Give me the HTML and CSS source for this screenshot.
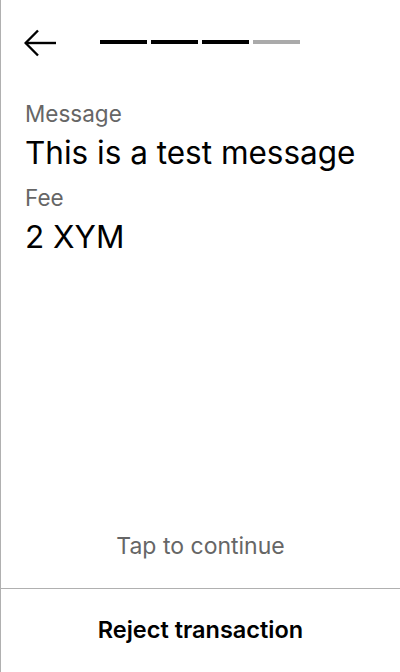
FILE: index.html
```html
<!DOCTYPE html>
<html lang="en">
<head>
<meta charset="utf-8">
<title>Confirm transaction</title>
<link rel="stylesheet" href="styles.css">
</head>
<body>
<div class="screen">
  <header class="header">
    <button class="back" aria-label="Back">
      <svg width="32" height="28" viewBox="0 0 32 28" fill="none" stroke="#000" stroke-width="2.4" stroke-linecap="butt" stroke-linejoin="miter">
        <path d="M14 1.5 L1.6 14 L14 26.5"/>
        <path d="M1.6 14 H32"/>
      </svg>
    </button>
    <div class="progress">
      <span class="step done"></span>
      <span class="step done"></span>
      <span class="step done"></span>
      <span class="step"></span>
    </div>
  </header>
  <main class="content">
    <div class="label">Message</div>
    <div class="value">This is a test message</div>
    <div class="label">Fee</div>
    <div class="value">2 XYM</div>
  </main>
  <div class="tap">Tap to continue</div>
  <button class="reject">Reject transaction</button>
</div>
</body>
</html>
```

FILE: styles.css
```css
html, body {
  margin: 0;
  padding: 0;
  background: #fff;
}
body {
  font-family: Inter, "Noto Sans", sans-serif;
  color: #000;
}
.screen {
  box-sizing: border-box;
  width: 400px;
  height: 672px;
  border-left: 1px solid #b0b0b0;
  display: flex;
  flex-direction: column;
}
.header {
  display: flex;
  align-items: center;
  padding: 29px 23px 0;
  gap: 44px;
}
.back {
  border: 0;
  background: none;
  padding: 0;
  width: 32px;
  height: 28px;
  display: block;
  cursor: pointer;
}
.back svg {
  display: block;
}
.progress {
  display: flex;
  gap: 4px;
  margin-top: -2px;
}
.step {
  display: block;
  width: 47px;
  height: 4px;
  background: #aaa;
}
.step.done {
  background: #000;
}
.content {
  flex: 1;
  padding: 43px 24px 0;
}
.label {
  font-size: 22.5px;
  line-height: 27px;
  color: #666;
  margin-bottom: 7px;
}
.value {
  font-size: 31.5px;
  line-height: 38px;
  color: #000;
  margin-bottom: 12px;
}
.tap {
  text-align: center;
  font-size: 23px;
  line-height: 28px;
  color: #666;
  padding-bottom: 28px;
  border-bottom: 1px solid #b0b0b0;
}
.reject {
  border: 0;
  background: none;
  font-family: inherit;
  font-size: 23.5px;
  line-height: 28px;
  font-weight: 600;
  color: #000;
  padding: 27px 0 28px;
  text-align: center;
  width: 100%;
  cursor: pointer;
}
```
